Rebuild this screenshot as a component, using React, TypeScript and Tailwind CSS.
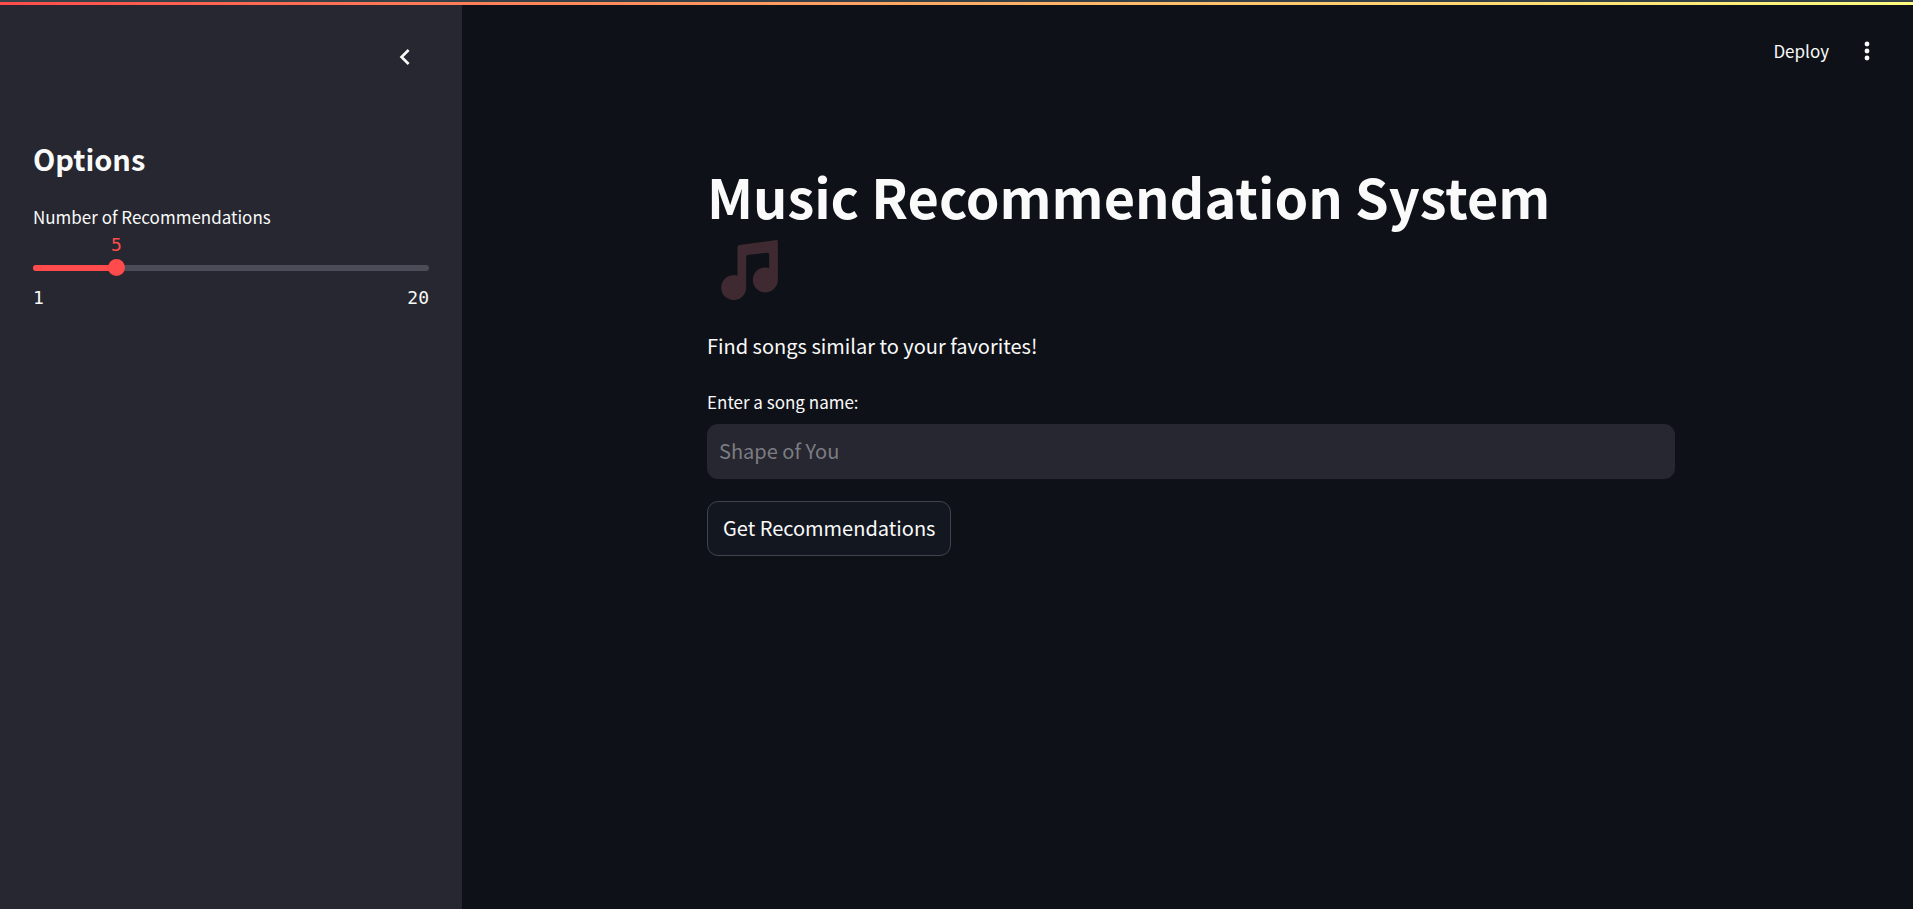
import { useState } from "react";

const MIN = 1;
const MAX = 20;

function TopDecoration() {
  return (
    <div className="h-[5px] w-full bg-linear-to-r from-[#ff4b4b] to-[#fffd80]">
      <div className="h-[2px] bg-[#364147]" />
    </div>
  );
}

function MusicNotes() {
  return (
    <svg
      role="img"
      aria-label="Musical notes"
      viewBox="92 269 170 180"
      className="mt-2 ml-[14px] h-[60px] w-[57px] fill-[#402a31]"
    >
      <path d="M147 284 L258 269 Q262 269 262 273 V389 A37.500 37.500 0 1 1 236 353 V312 Q236 307 231 307 L172 314 Q167 315 167 320 V412 A37.500 37.500 0 1 1 141 376 V290 Q141 285 147 284 Z" />
    </svg>
  );
}

function Sidebar() {
  const [count, setCount] = useState(5);
  const percent = ((count - MIN) / (MAX - MIN)) * 100;

  return (
    <aside className="w-[462px] shrink-0 bg-[#262730] px-[33px]">
      <div className="flex justify-end pt-8">
        <button type="button" aria-label="Collapse sidebar" className="mr-1 p-1">
          <svg viewBox="0 0 24 24" className="size-8 fill-[#fafafa]">
            <path d="M15.410 7.410 14 6l-6 6 6 6 1.410-1.410L10.830 12z" />
          </svg>
        </button>
      </div>

      <h2 className="mt-[61px] text-[29px] leading-10 font-semibold">Options</h2>

      <label htmlFor="count" className="mt-[25px] block text-[17px] leading-7">
        Number of Recommendations
      </label>
      <div className="text-[18px] leading-7 text-[#ff4b4b]">
        <output
          htmlFor="count"
          className="block w-fit -translate-x-1/2 font-['DejaVu_Sans_Mono',monospace]"
          style={{ marginLeft: `${percent}%` }}
        >
          {count}
        </output>
      </div>
      <div className="grid items-center">
        <div className="col-start-1 row-start-1 h-[6px] overflow-hidden rounded-full bg-[#4b4c57]">
          <div className="h-full bg-[#ff4b4b]" style={{ width: `${percent}%` }} />
        </div>
        <input
          id="count"
          type="range"
          min={MIN}
          max={MAX}
          value={count}
          onChange={(e) => setCount(Number(e.target.value))}
          className="col-start-1 row-start-1 -mx-2 h-[17px] w-[calc(100%+16px)] cursor-pointer appearance-none bg-transparent [&::-webkit-slider-thumb]:size-[17px] [&::-webkit-slider-thumb]:appearance-none [&::-webkit-slider-thumb]:rounded-full [&::-webkit-slider-thumb]:bg-[#ff4b4b]"
        />
      </div>
      <div className="mt-2 flex justify-between font-['DejaVu_Sans_Mono',monospace] text-[18px] leading-7">
        <span>{MIN}</span>
        <span>{MAX}</span>
      </div>
    </aside>
  );
}

export default function App() {
  return (
    <div className="flex min-h-screen flex-col bg-[#0e1117] font-['Noto_Sans_CJK_SC','Noto_Sans',sans-serif] text-[#fafafa]">
      <TopDecoration />
      <div className="flex grow">
        <Sidebar />
        <div className="flex min-w-0 grow flex-col">
          <header className="flex items-center justify-end gap-5 pt-7 pr-7">
            <button type="button" className="text-[17px] leading-9">
              Deploy
            </button>
            <button type="button" aria-label="Main menu" className="p-1">
              <svg viewBox="0 0 24 24" className="size-7 fill-[#fafafa]">
                <circle cx="12" cy="6" r="2.100" />
                <circle cx="12" cy="12" r="2.100" />
                <circle cx="12" cy="18" r="2.100" />
              </svg>
            </button>
          </header>

          <div className="pt-[91px] pl-[7px]">
            <main className="mx-auto w-full max-w-[968px]">
              <h1 className="text-[54px] leading-[72px] font-bold">
                Music Recommendation System
                <MusicNotes />
              </h1>
              <p className="mt-7 text-[20px] leading-9">Find songs similar to your favorites!</p>
              <form onSubmit={(e) => e.preventDefault()}>
                <label htmlFor="song" className="mt-6 block text-[17px] leading-7">
                  Enter a song name:
                </label>
                <input
                  id="song"
                  type="text"
                  placeholder="Shape of You"
                  className="mt-2 block h-[55px] w-full rounded-[11px] bg-[#262730] px-3 pb-[2px] text-[20px] outline-none placeholder:text-[#7c7c83]"
                />
                <button
                  type="submit"
                  className="mt-[22px] h-[55px] rounded-[11px] border border-[#41444c] bg-[#131720] px-[15px] pb-[2px] text-[20px]"
                >
                  Get Recommendations
                </button>
              </form>
            </main>
          </div>
        </div>
      </div>
    </div>
  );
}
